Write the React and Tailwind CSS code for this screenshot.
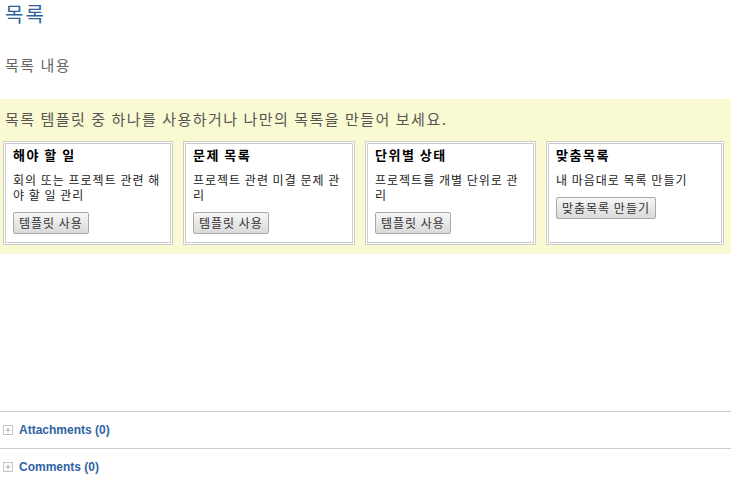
import React from "react";

const KR = { fontFamily: '"Noto Sans CJK KR", "Noto Sans", sans-serif' };

const templates = [
  { title: "해야 할 일", lines: ["회의 또는 프로젝트 관련 해", "야 할 일 관리"], button: "템플릿 사용", w: "w-[170px]" },
  { title: "문제 목록", lines: ["프로젝트 관련 미결 문제 관", "리"], button: "템플릿 사용", w: "w-[172px]" },
  { title: "단위별 상태", lines: ["프로젝트를 개별 단위로 관", "리"], button: "템플릿 사용", w: "w-[171px]" },
  { title: "맞춤목록", lines: ["내 마음대로 목록 만들기"], button: "맞춤목록 만들기", w: "w-[178px]" },
];

function PlusBox() {
  return (
    <svg width="10" height="10" viewBox="0 0 10 10" className="shrink-0">
      <rect x="0.5" y="0.5" width="9" height="9" fill="none" stroke="#c4c4c4" />
      <path d="M5 2.5v5M2.5 5h5" stroke="#b0b0b0" strokeWidth="1" />
    </svg>
  );
}

function TemplateCard({ t }) {
  return (
    <div className={`${t.w} h-[104px] border border-[#cccccc] bg-white p-[1px]`}>
      <div className="h-full border border-[#cccccc] px-[7px] pt-[2px]">
        <div className="text-[13px] leading-[18px] tracking-[1.5px] font-bold text-black">{t.title}</div>
        <div className="mt-[8px] text-[12px] leading-[15px] tracking-[1px] text-[#222]">
          {t.lines.map((l, i) => (
            <div key={i} className="whitespace-nowrap">{l}</div>
          ))}
        </div>
        <button className="mt-[10px] h-[22px] px-[5px] text-[12px] leading-[20px] tracking-[1px] text-[#333] border border-[#a9a9a9] rounded-[2px] bg-gradient-to-b from-[#f6f6f6] to-[#dadada]">
          {t.button}
        </button>
      </div>
    </div>
  );
}

export default function App() {
  return (
    <div className="w-[731px] h-[477px] bg-white overflow-hidden" style={KR}>
      <div className="pl-[5px] h-[28px] text-[20px] leading-[28px] tracking-[2px] text-[#2f6296]">목록</div>
      <div className="pl-[5px] mt-[27px] h-[20px] text-[15px] leading-[20px] tracking-[1.5px] text-[#666]">목록 내용</div>

      <div className="mt-[24px] bg-[#fafad2] px-[3px] pt-[10px] pb-[9px]">
        <div className="pl-[2px] h-[20px] text-[15px] leading-[20px] tracking-[1.5px] text-[#555]">
          목록 템플릿 중 하나를 사용하거나 나만의 목록을 만들어 보세요.
        </div>
        <div className="mt-[12px] flex gap-[10px]">
          {templates.map((t) => (
            <TemplateCard key={t.title} t={t} />
          ))}
        </div>
      </div>

      <div className="mt-[157px] border-t border-[#cccccc]" style={{ fontFamily: '"Liberation Sans", Arial, sans-serif' }}>
        <div className="h-[36px] flex items-center gap-[6px] pl-[3px]">
          <PlusBox />
          <span className="text-[12px] font-bold text-[#2f64a3]">Attachments (0)</span>
        </div>
        <div className="border-t border-[#cccccc] h-[36px] flex items-center gap-[6px] pl-[3px]">
          <PlusBox />
          <span className="text-[12px] font-bold text-[#2f64a3]">Comments (0)</span>
        </div>
      </div>
    </div>
  );
}
